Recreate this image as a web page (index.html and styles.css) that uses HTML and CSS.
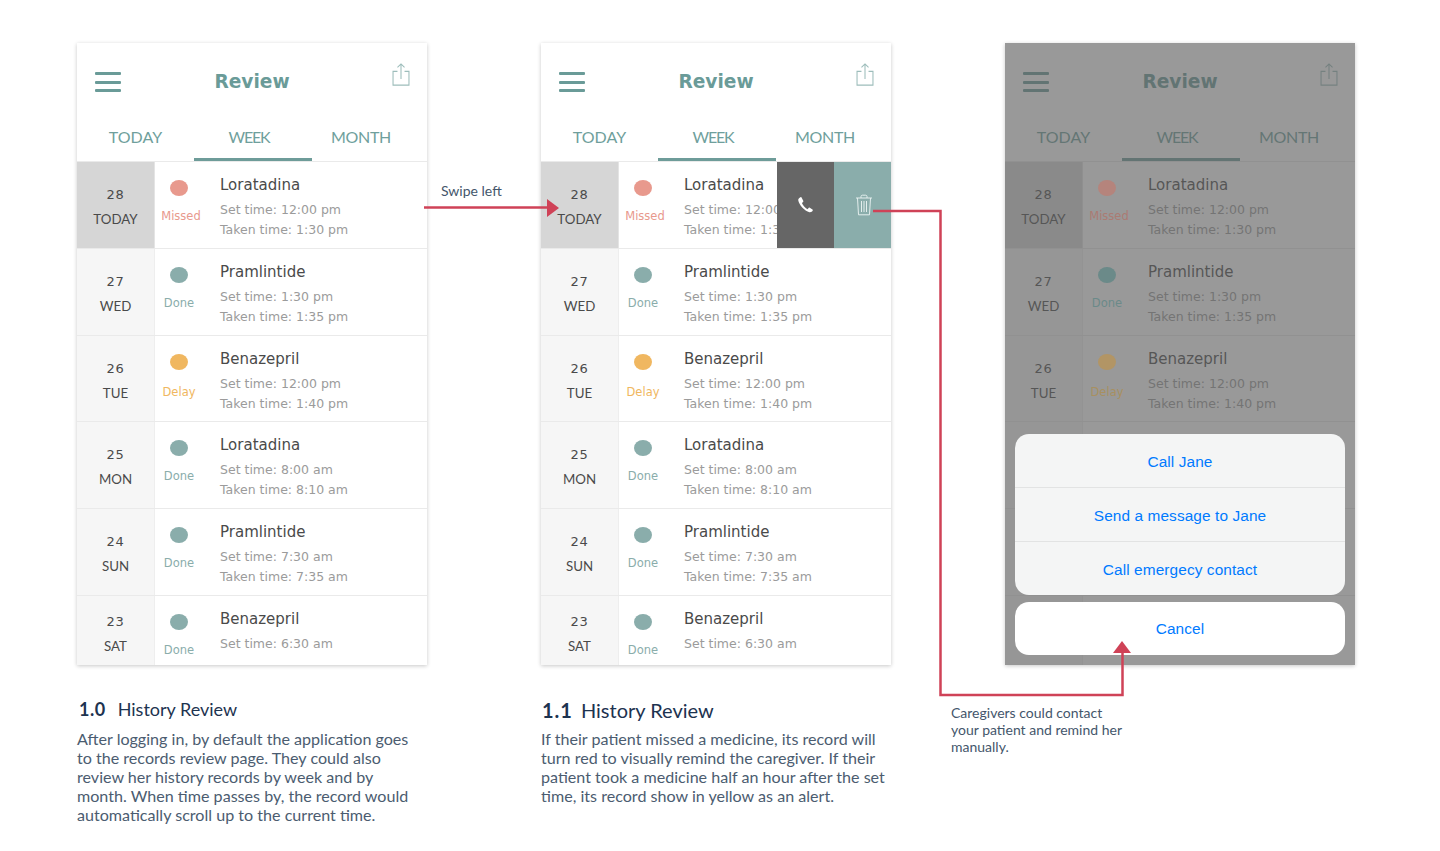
FILE: index.html
```html
<!DOCTYPE html>
<html lang="en">
<head>
    <meta charset="UTF-8">
    <meta name="viewport" content="width=device-width, initial-scale=1.0">
    <title>History Review</title>
    <link rel="stylesheet" href="styles.css">
</head>
<body>

<div class="board">

    <div class="column">
        <div class="screen">
            <div class="top-bar">
                <div class="menu-icon"><span></span><span></span><span></span></div>
                <div class="top-title">Review</div>
                <svg class="share-icon" viewBox="0 0 20 26"><path d="M6 9.5H1V25H19V9.5H14M10 18V1M6 5L10 1L14 5"/></svg>
            </div>
            <div class="tabs">
                <div class="tab">TODAY</div>
                <div class="tab tab-week active">WEEK</div>
                <div class="tab tab-month">MONTH</div>
            </div>
            <div class="row">
                <div class="date today"><span class="day">28</span><span class="weekday">TODAY</span></div>
                <div class="status missed"><i class="dot"></i><span>Missed</span></div>
                <div class="info"><div class="name">Loratadina</div><div class="time">Set time: 12:00 pm</div><div class="time">Taken time: 1:30 pm</div></div>
            </div>
            <div class="row">
                <div class="date"><span class="day">27</span><span class="weekday">WED</span></div>
                <div class="status done"><i class="dot"></i><span>Done</span></div>
                <div class="info"><div class="name">Pramlintide</div><div class="time">Set time: 1:30 pm</div><div class="time">Taken time: 1:35 pm</div></div>
            </div>
            <div class="row">
                <div class="date"><span class="day">26</span><span class="weekday">TUE</span></div>
                <div class="status delay"><i class="dot"></i><span>Delay</span></div>
                <div class="info"><div class="name">Benazepril</div><div class="time">Set time: 12:00 pm</div><div class="time">Taken time: 1:40 pm</div></div>
            </div>
            <div class="row">
                <div class="date"><span class="day">25</span><span class="weekday">MON</span></div>
                <div class="status done"><i class="dot"></i><span>Done</span></div>
                <div class="info"><div class="name">Loratadina</div><div class="time">Set time: 8:00 am</div><div class="time">Taken time: 8:10 am</div></div>
            </div>
            <div class="row">
                <div class="date"><span class="day">24</span><span class="weekday">SUN</span></div>
                <div class="status done"><i class="dot"></i><span>Done</span></div>
                <div class="info"><div class="name">Pramlintide</div><div class="time">Set time: 7:30 am</div><div class="time">Taken time: 7:35 am</div></div>
            </div>
            <div class="row last">
                <div class="date"><span class="day">23</span><span class="weekday">SAT</span></div>
                <div class="status done"><i class="dot"></i><span>Done</span></div>
                <div class="info"><div class="name">Benazepril</div><div class="time">Set time: 6:30 am</div></div>
            </div>
        </div>
        <h3 class="caption-title"><b>1.0</b>History Review</h3>
        <p class="caption-text">After logging in, by default the application goes to the records review page. They could also review her history records by week and by month. When time passes by, the record would automatically scroll up to the current time.</p>
    </div>

    <div class="column">
        <div class="screen">
            <div class="top-bar">
                <div class="menu-icon"><span></span><span></span><span></span></div>
                <div class="top-title">Review</div>
                <svg class="share-icon" viewBox="0 0 20 26"><path d="M6 9.5H1V25H19V9.5H14M10 18V1M6 5L10 1L14 5"/></svg>
            </div>
            <div class="tabs">
                <div class="tab">TODAY</div>
                <div class="tab tab-week active">WEEK</div>
                <div class="tab tab-month">MONTH</div>
            </div>
            <div class="row">
                <div class="date today"><span class="day">28</span><span class="weekday">TODAY</span></div>
                <div class="status missed"><i class="dot"></i><span>Missed</span></div>
                <div class="info"><div class="name">Loratadina</div><div class="time">Set time: 12:00 pm</div><div class="time">Taken time: 1:30 pm</div></div>
                <div class="swipe-actions">
                    <div class="action action-call">
                        <svg viewBox="0 0 24 24" width="20" height="20"><path d="M6.6 2.6C5.2 3.2 3.6 4.600 3.9 6.400C4.700 11.800 11.400 19.300 17.300 20.700C19.100 21.100 20.600 20 21.300 18.700C21.500 18.200 21.400 17.800 21 17.500L17.700 15.300C17.200 15 16.800 15.100 16.400 15.500L14.900 17C12.200 15.600 9.400 12.500 8.300 9.700L9.700 8.300C10.100 7.900 10.200 7.400 9.900 6.900L7.800 3C7.500 2.500 7.100 2.400 6.600 2.600Z" fill="#fff"/></svg>
                    </div>
                    <div class="action action-trash">
                        <svg viewBox="0 0 18 22" width="18" height="22"><path d="M1 4H17M6 4V2.500C6 1.700 6.500 1.200 7.300 1.200H10.700C11.500 1.200 12 1.700 12 2.500V4M2.500 4L3.500 20.800H14.500L15.500 4M6.500 7V18M9 7V18M11.500 7V18"/></svg>
                    </div>
                </div>
            </div>
            <div class="row">
                <div class="date"><span class="day">27</span><span class="weekday">WED</span></div>
                <div class="status done"><i class="dot"></i><span>Done</span></div>
                <div class="info"><div class="name">Pramlintide</div><div class="time">Set time: 1:30 pm</div><div class="time">Taken time: 1:35 pm</div></div>
            </div>
            <div class="row">
                <div class="date"><span class="day">26</span><span class="weekday">TUE</span></div>
                <div class="status delay"><i class="dot"></i><span>Delay</span></div>
                <div class="info"><div class="name">Benazepril</div><div class="time">Set time: 12:00 pm</div><div class="time">Taken time: 1:40 pm</div></div>
            </div>
            <div class="row">
                <div class="date"><span class="day">25</span><span class="weekday">MON</span></div>
                <div class="status done"><i class="dot"></i><span>Done</span></div>
                <div class="info"><div class="name">Loratadina</div><div class="time">Set time: 8:00 am</div><div class="time">Taken time: 8:10 am</div></div>
            </div>
            <div class="row">
                <div class="date"><span class="day">24</span><span class="weekday">SUN</span></div>
                <div class="status done"><i class="dot"></i><span>Done</span></div>
                <div class="info"><div class="name">Pramlintide</div><div class="time">Set time: 7:30 am</div><div class="time">Taken time: 7:35 am</div></div>
            </div>
            <div class="row last">
                <div class="date"><span class="day">23</span><span class="weekday">SAT</span></div>
                <div class="status done"><i class="dot"></i><span>Done</span></div>
                <div class="info"><div class="name">Benazepril</div><div class="time">Set time: 6:30 am</div></div>
            </div>
        </div>
        <h3 class="caption-title big"><b>1.1</b>History Review</h3>
        <p class="caption-text">If their patient missed a medicine, its record will turn red to visually remind the caregiver. If their patient took a medicine half an hour after the set time, its record show in yellow as an alert.</p>
    </div>

    <div class="column">
        <div class="screen dimmed">
            <div class="top-bar">
                <div class="menu-icon"><span></span><span></span><span></span></div>
                <div class="top-title">Review</div>
                <svg class="share-icon" viewBox="0 0 20 26"><path d="M6 9.5H1V25H19V9.5H14M10 18V1M6 5L10 1L14 5"/></svg>
            </div>
            <div class="tabs">
                <div class="tab">TODAY</div>
                <div class="tab tab-week active">WEEK</div>
                <div class="tab tab-month">MONTH</div>
            </div>
            <div class="row">
                <div class="date today"><span class="day">28</span><span class="weekday">TODAY</span></div>
                <div class="status missed"><i class="dot"></i><span>Missed</span></div>
                <div class="info"><div class="name">Loratadina</div><div class="time">Set time: 12:00 pm</div><div class="time">Taken time: 1:30 pm</div></div>
            </div>
            <div class="row">
                <div class="date"><span class="day">27</span><span class="weekday">WED</span></div>
                <div class="status done"><i class="dot"></i><span>Done</span></div>
                <div class="info"><div class="name">Pramlintide</div><div class="time">Set time: 1:30 pm</div><div class="time">Taken time: 1:35 pm</div></div>
            </div>
            <div class="row">
                <div class="date"><span class="day">26</span><span class="weekday">TUE</span></div>
                <div class="status delay"><i class="dot"></i><span>Delay</span></div>
                <div class="info"><div class="name">Benazepril</div><div class="time">Set time: 12:00 pm</div><div class="time">Taken time: 1:40 pm</div></div>
            </div>
            <div class="row"><div class="date"></div></div>
            <div class="row"><div class="date"></div></div>
            <div class="row last"><div class="date"></div></div>

            <div class="dim"></div>
            <div class="sheet">
                <div class="sheet-group">
                    <div class="sheet-item">Call Jane</div>
                    <div class="sheet-item">Send a message to Jane</div>
                    <div class="sheet-item">Call emergecy contact</div>
                </div>
                <div class="sheet-cancel">Cancel</div>
            </div>
        </div>
    </div>

    <!-- annotations drawn over the screens -->
    <svg class="connectors" width="1440" height="851">
        <path class="line" d="M424 207.500H549"/>
        <path class="head" d="M547 199L559 208L547 217Z"/>
        <path class="line" d="M873 211H940.500V695H1122.500V652"/>
        <path class="head" d="M1113 653L1122 641L1131 653Z"/>
    </svg>
    <div class="note note-swipe">Swipe left</div>
    <div class="note note-contact">Caregivers could contact your patient and remind her manually.</div>
</div>

</body>
</html>
```

FILE: styles.css
```css
* {
    box-sizing: border-box;
}

body {
    margin: 0;
    padding: 0;
    background-color: #fff;
    font-family: "DejaVu Sans", sans-serif;
}

.board {
    position: relative;
    width: 1440px;
    height: 851px;
    overflow: hidden;
    display: flex;
    gap: 114px;
    padding: 43px 0 0 77px;
}

.column {
    width: 350px;
}

.screen {
    position: relative;
    height: 622px;
    overflow: hidden;
    background-color: #fff;
    box-shadow: 0 1px 4px rgba(0, 0, 0, 0.22);
}

.top-bar {
    display: flex;
    align-items: center;
    justify-content: center;
    position: relative;
    height: 76px;
}

.top-title {
    font-size: 18.6px;
    font-weight: 700;
    color: #6a9b98;
}

.menu-icon {
    position: absolute;
    left: 18px;
    top: 29px;
    width: 26px;
}

.menu-icon span {
    display: block;
    height: 3px;
    margin-bottom: 5.5px;
    border-radius: 1px;
    background-color: #6a9b98;
}

.share-icon {
    position: absolute;
    left: 315px;
    top: 20px;
    width: 18px;
    height: 23px;
    fill: none;
    stroke: #9dbdbb;
    stroke-width: 1.2;
}

.tabs {
    display: flex;
    height: 43px;
    border-bottom: 1px solid #eaeaea;
    font-family: "Lato", sans-serif;
    font-size: 16px;
    color: #6f9f9c;
}

.tab {
    width: 117px;
    height: 42px;
    line-height: 35px;
    text-align: center;
}

.tab-week {
    width: 118px;
    padding-right: 8px;
    letter-spacing: -1.2px;
}

.tab-month {
    width: 115px;
    padding-right: 17px;
    letter-spacing: -0.3px;
}

.tab.active {
    border-bottom: 3px solid #6e9c99;
}

.row {
    position: relative;
    display: flex;
    height: 86.8px;
    border-bottom: 1px solid #eaeaea;
}

.row.last {
    height: 70px;
    border-bottom: none;
}

.date {
    width: 78px;
    flex-shrink: 0;
    display: flex;
    flex-direction: column;
    align-items: center;
    padding-top: 24px;
    background-color: #f6f6f6;
    border-right: 1px solid #eeeeee;
    color: #4a4a4a;
}

.row.last .date {
    padding-top: 17px;
}

.date.today {
    background-color: #d6d6d6;
    border-right-color: #e4e4e4;
}

.day {
    font-size: 13px;
    line-height: 18px;
    letter-spacing: 0.8px;
}

.weekday {
    font-family: "Lato", sans-serif;
    font-size: 13.3px;
    line-height: 18px;
    margin-top: 6px;
}

.status {
    width: 48px;
    flex-shrink: 0;
    display: flex;
    flex-direction: column;
    align-items: center;
    padding-top: 18px;
    font-size: 11.5px;
    white-space: nowrap;
}

.dot {
    width: 18px;
    height: 16px;
    border-radius: 50%;
    margin-bottom: 12px;
}

.status span {
    line-height: 16px;
}

.missed .dot {
    background-color: #e8998d;
}

.missed span {
    color: #e8998d;
    margin-left: 4px;
}

.done .dot {
    background-color: #8aadab;
}

.done span {
    color: #8aadab;
}

.delay .dot {
    background-color: #f0b760;
}

.delay span {
    color: #f0b760;
    margin-top: 2px;
}

.info {
    padding: 12px 0 0 17px;
    white-space: nowrap;
}

.name {
    font-size: 15px;
    line-height: 22px;
    color: #4a4a4a;
    margin-bottom: 4px;
}

.time {
    font-size: 12.5px;
    line-height: 20px;
    color: #9b9b9b;
}

.swipe-actions {
    position: absolute;
    right: 0;
    top: 0;
    bottom: 0;
    display: flex;
}

.action {
    display: flex;
    align-items: center;
    justify-content: center;
    width: 57px;
}

.action-call {
    padding-right: 2px;
    background-color: #666;
}

.action-trash {
    padding-left: 3px;
    background-color: #8aadab;
}

.action-trash path {
    fill: none;
    stroke: #e3eeed;
    stroke-width: 1;
}

.dim {
    position: absolute;
    left: 0;
    top: 0;
    right: 0;
    bottom: 0;
    background-color: rgba(93, 93, 93, 0.63);
}

/* status colours keep more of their hue under the dim layer */
.dimmed .status .dot,
.dimmed .status span {
    position: relative;
    z-index: 1;
}

.dimmed .missed .dot {
    background-color: #b5847c;
}

.dimmed .missed span {
    color: #ab7b73;
}

.dimmed .done .dot {
    background-color: #6b8a89;
}

.dimmed .done span {
    color: #6b8a89;
}

.dimmed .delay .dot {
    background-color: #b29565;
}

.dimmed .delay span {
    color: #a89060;
}

.sheet {
    position: absolute;
    left: 10px;
    right: 10px;
    top: 391px;
    z-index: 2;
    font-family: "Liberation Sans", sans-serif;
    font-size: 15.4px;
    letter-spacing: 0.1px;
    color: #007aff;
    text-align: center;
}

.sheet-group {
    border-radius: 14px;
    overflow: hidden;
    background-color: #f4f5f5;
}

.sheet-item {
    height: 54px;
    line-height: 56px;
    border-bottom: 1px solid #e2e3e3;
}

.sheet-item:last-child {
    height: 53px;
    border-bottom: none;
}

.sheet-cancel {
    height: 53px;
    line-height: 53px;
    margin-top: 7px;
    border-radius: 14px;
    background-color: #fff;
}

.caption-title {
    margin: 32px 0 0 2px;
    font-family: "Lato", sans-serif;
    font-size: 18px;
    line-height: 24px;
    font-weight: 400;
    color: #1d3350;
}

.caption-title b {
    margin-right: 12px;
    letter-spacing: 0.5px;
}

.caption-title.big {
    font-size: 20px;
    margin-top: 33px;
    margin-left: 1px;
}

.caption-title.big b {
    margin-right: 8px;
    letter-spacing: 1px;
}

.caption-text {
    width: 340px;
    margin: 8px 0 0;
    font-family: "Lato", sans-serif;
    font-size: 16.1px;
    line-height: 19px;
    color: #4b5c70;
}

.caption-title.big + .caption-text {
    width: 350px;
    margin-top: 7px;
}

.connectors {
    position: absolute;
    left: 0;
    top: 0;
    z-index: 3;
}

.line {
    fill: none;
    stroke: #cf4257;
    stroke-width: 2.5;
}

.head {
    fill: #cf4257;
}

.note {
    position: absolute;
    font-family: "Lato", sans-serif;
    font-size: 14px;
    line-height: 17px;
    color: #44566b;
}

.note-swipe {
    left: 441px;
    top: 182px;
}

.note-contact {
    left: 951px;
    top: 704px;
    width: 180px;
}
```
